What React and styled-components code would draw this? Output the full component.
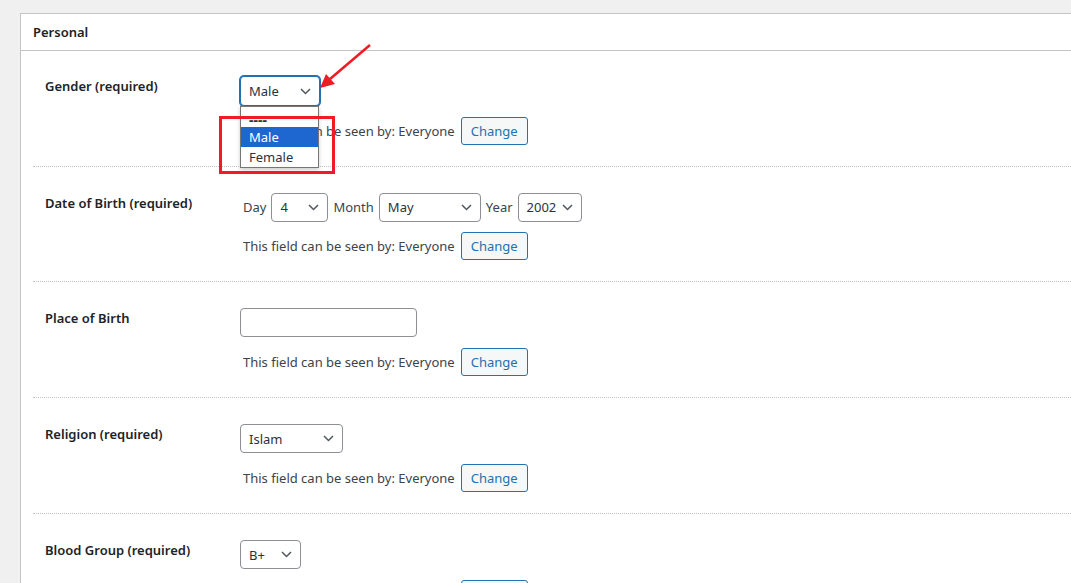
import React from "react";
import styled, { createGlobalStyle } from "styled-components";

const GlobalStyle = createGlobalStyle`
  html, body {
    margin: 0;
    padding: 0;
    background: #f0f0f1;
    font-family: "Segoe UI", "Noto Sans", "Open Sans", sans-serif;
    font-size: 13px;
    color: #3c434a;
    overflow: hidden;
  }
  * { box-sizing: border-box; }
`;

const Page = styled.div`
  position: relative;
  height: 583px;
  padding: 13px 0 0 20px;
`;

const Panel = styled.div`
  background: #fff;
  border: 1px solid #c3c4c7;
  border-right: none;
  height: 700px;
`;

const PanelHeader = styled.div`
  height: 37px;
  line-height: 36px;
  padding: 0 12px;
  border-bottom: 1px solid #c3c4c7;
  font-size: 13px;
  font-weight: 600;
  color: #1d2327;
`;

const Rows = styled.div`
  padding: 0 0 0 12px;
`;

const Row = styled.div`
  display: grid;
  grid-template-columns: 207px 1fr;
  padding: ${(p) => (p.$first ? "25px" : "26px")} 0 21px;
  border-top: ${(p) => (p.$first ? "none" : "1px dotted #c3c4c7")};
`;

const Label = styled.div`
  padding: 1px 0 0 12px;
  font-size: 13px;
  font-weight: 600;
  color: #1d2327;
  line-height: 1.4;
`;

const Field = styled.div`
  display: flex;
  flex-direction: column;
  gap: 11px;
  align-items: flex-start;
`;

const Line = styled.div`
  display: flex;
  align-items: center;
  gap: 5px;
  height: 28px;
  padding-left: ${(p) => (p.$indent ? "3px" : "0")};
  font-size: 13px;
  color: #3c434a;
  white-space: nowrap;
`;

const SelectWrap = styled.div`
  position: relative;
`;

const SelectBox = styled.div`
  width: ${(p) => p.$w}px;
  height: ${(p) => p.$h || 29}px;
  border: 1px solid ${(p) => (p.$focus ? "#2271b1" : "#8c8f94")};
  box-shadow: ${(p) => (p.$focus ? "0 0 0 1px #2271b1" : "none")};
  border-radius: 4px;
  display: flex;
  align-items: center;
  justify-content: space-between;
  padding: 0 8px 0 8px;
  background: #fff;
  color: #2c3338;
  font-size: 13px;
`;

const Chevron = () => (
  <svg width="11" height="7" viewBox="0 0 11 7" fill="none">
    <path d="M1 1l4.5 4.5L10 1" stroke="#50575e" strokeWidth="1.5" />
  </svg>
);

const Select = ({ w, h, value, focus }) => (
  <SelectBox $w={w} $h={h} $focus={focus}>
    <span>{value}</span>
    <Chevron />
  </SelectBox>
);

const Dropdown = styled.div`
  position: absolute;
  top: 30px;
  left: 0;
  width: 79px;
  height: 62px;
  border: 1px solid #767676;
  background: #fff;
  overflow: hidden;
  box-shadow: 0 2px 4px rgba(0, 0, 0, 0.2);
  z-index: 2;
`;

const Option = styled.div`
  height: 20px;
  line-height: ${(p) => (p.$muted ? "26px" : "20px")};
  padding: 0 8px;
  font-size: ${(p) => (p.$muted ? "14px" : "13px")};
  background: ${(p) => (p.$active ? "#1e66d0" : "#fff")};
  color: ${(p) => (p.$active ? "#fff" : "#2c3338")};
  font-weight: ${(p) => (p.$muted ? 700 : 400)};
  overflow: hidden;
`;

const TextInput = styled.div`
  width: 177px;
  height: 29px;
  border: 1px solid #8c8f94;
  border-radius: 4px;
  background: #fff;
`;

const ChangeButton = styled.button`
  height: 28px;
  margin-left: 1px;
  padding: 0 9px;
  border: 1px solid #2271b1;
  border-radius: 3px;
  background: #f6f7f7;
  color: #2271b1;
  font-family: inherit;
  font-size: 13px;
  cursor: pointer;
`;

const Annotation = styled.svg`
  position: absolute;
  left: 0;
  top: 0;
  pointer-events: none;
  z-index: 5;
`;

const Visibility = () => (
  <Line $indent>
    <span>This field can be seen by: Everyone</span>
    <ChangeButton>Change</ChangeButton>
  </Line>
);

export default function App() {
  return (
    <>
      <GlobalStyle />
      <Page>
        <Panel>
          <PanelHeader>Personal</PanelHeader>
          <Rows>
            <Row $first>
              <Label>Gender (required)</Label>
              <Field>
                <SelectWrap>
                  <Select w={80} h={30} value="Male" focus />
                  <Dropdown>
                    <Option $muted>----</Option>
                    <Option $active>Male</Option>
                    <Option>Female</Option>
                  </Dropdown>
                </SelectWrap>
                <Visibility />
              </Field>
            </Row>
            <Row>
              <Label>Date of Birth (required)</Label>
              <Field>
                <Line $indent>
                  <span>Day</span>
                  <Select w={57} value="4" />
                  <span>Month</span>
                  <Select w={102} value="May" />
                  <span>Year</span>
                  <Select w={64} value="2002" />
                </Line>
                <Visibility />
              </Field>
            </Row>
            <Row>
              <Label>Place of Birth</Label>
              <Field>
                <TextInput />
                <Visibility />
              </Field>
            </Row>
            <Row>
              <Label>Religion (required)</Label>
              <Field>
                <Select w={103} value="Islam" />
                <Visibility />
              </Field>
            </Row>
            <Row>
              <Label>Blood Group (required)</Label>
              <Field>
                <Select w={61} value="B+" />
                <Visibility />
              </Field>
            </Row>
          </Rows>
        </Panel>
        <Annotation width="1071" height="583" viewBox="0 0 1071 583">
          <rect x="220.5" y="117.5" width="113" height="55" fill="none" stroke="#ee1c25" strokeWidth="3" />
          <line x1="370" y1="45" x2="330" y2="79" stroke="#ee1c25" strokeWidth="2.5" />
          <polygon points="320,88 326,74 335,84" fill="#ee1c25" />
        </Annotation>
      </Page>
    </>
  );
}
